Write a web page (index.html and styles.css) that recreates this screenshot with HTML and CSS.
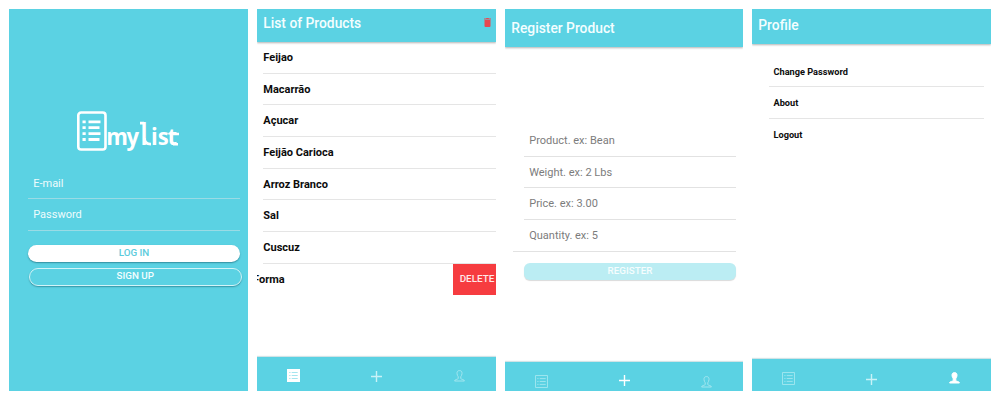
FILE: index.html
```html
<!DOCTYPE html>
<html lang="en">
<head>
<meta charset="utf-8">
<title>myList</title>
<link rel="stylesheet" href="styles.css">
</head>
<body>
<svg class="defs" width="0" height="0" aria-hidden="true">
  <symbol id="list-outline" viewBox="0 0 13 13">
    <path d="M.5.5h12v12H.5z M4.7 3.6h6 M4.7 6.5h6 M4.7 9.4h6 M2.3 3.6h1.2 M2.3 6.5h1.2 M2.3 9.4h1.2" fill="none" stroke="currentColor" stroke-width=".9"/>
  </symbol>
  <symbol id="list-solid" viewBox="0 0 13 13">
    <path d="M0 0h13v13H0z" fill="#fff"/>
    <path d="M4.7 3.5h6 M4.7 6.5h6 M4.7 9.5h6 M2.2 3.5h1.3 M2.2 6.5h1.3 M2.2 9.5h1.3" fill="none" stroke="#a5e5ee" stroke-width="1"/>
  </symbol>
  <symbol id="plus" viewBox="0 0 11 11">
    <path d="M5.5 0v11M0 5.5h11" fill="none" stroke="currentColor" stroke-width="1.4"/>
  </symbol>
  <symbol id="person" viewBox="0 0 11 12">
    <path d="M5.500.6C3.600.6 2.900 1.700 3 3.500c.1 1.500.6 2.400 1.200 3.200v1.900C3.500 9.600.8 9.200.6 11h9.800C10.200 9.200 7.500 9.600 6.800 8.600V6.700C7.400 5.900 7.900 5 8 3.500 8.100 1.700 7.400.6 5.500.6z"/>
  </symbol>
</svg>
<main class="board">
  <section class="screen login">
    <svg class="logo" width="104" height="44" viewBox="0 0 104 44" role="img" aria-label="mylist">
      <rect x="2.300" y="2.500" width="27.200" height="37" rx="2.800" fill="none" stroke="#fff" stroke-width="2.600"/>
      <path d="M6.500 11.800h3.200M6.500 17.600h3.200M6.500 23.600h3.200M6.500 29.500h3.200M12.500 11.800h12M12.500 17.600h11M12.500 23.600h12M12.500 29.500h11" stroke="#fff" stroke-width="2.800" fill="none"/>
      <text class="wordmark" transform="scale(.92 1)" y="35.500" x="33 55 69.500 81.500 89 99.500">my<tspan class="tall">l</tspan>ist</text>
      <path d="M64 13.100h4M68.300 28q0 6.200 6.700 6.200" fill="none" stroke="#fff" stroke-width="2.800"/>
      <path d="M97 34.200h5M97 24h6" fill="none" stroke="#fff" stroke-width="2.500"/>
    </svg>
    <div class="form">
      <div class="field">E-mail</div>
      <div class="field">Password</div>
    </div>
    <button class="btn primary">LOG IN</button>
    <button class="btn outline">SIGN UP</button>
  </section>

  <section class="screen products">
    <header class="bar"><h1>List of Products</h1>
      <svg width="7" height="9" viewBox="0 0 7 9"><path d="M0 .5h2L2.500 0h2L5 .5h2v1H0zM.5 2h6v6q0 1-1 1h-4q-1 0-1-1z" fill="#e84850"/></svg>
    </header>
    <ul class="items">
      <li>Feijao</li><li>Macarrão</li><li>Açucar</li><li>Feijão Carioca</li><li>Arroz Branco</li><li>Sal</li><li>Cuscuz</li>
      <li class="swiped"><span>Forma</span><button class="delete">DELETE</button></li>
    </ul>
    <nav class="tabs">
      <svg class="on" width="13" height="13"><use href="#list-solid"/></svg>
      <svg class="mid" width="11" height="11"><use href="#plus"/></svg>
      <svg class="user" width="11" height="12"><use href="#person"/></svg>
    </nav>
  </section>

  <section class="screen register">
    <header class="bar"><h1>Register Product</h1></header>
    <div class="form">
      <div class="field">Product. ex: Bean</div>
      <div class="field">Weight. ex: 2 Lbs</div>
      <div class="field">Price. ex: 3.00</div>
      <div class="field last">Quantity. ex: 5</div>
    </div>
    <button class="btn disabled">REGISTER</button>
    <nav class="tabs">
      <svg width="13" height="13"><use href="#list-outline"/></svg>
      <svg class="on" width="11" height="11"><use href="#plus"/></svg>
      <svg class="user" width="11" height="12"><use href="#person"/></svg>
    </nav>
  </section>

  <section class="screen profile">
    <header class="bar"><h1>Profile</h1></header>
    <ul class="menu"><li>Change Password</li><li>About</li><li>Logout</li></ul>
    <nav class="tabs">
      <svg width="13" height="13"><use href="#list-outline"/></svg>
      <svg class="mid" width="11" height="11"><use href="#plus"/></svg>
      <svg class="user solid" width="11" height="12"><use href="#person"/></svg>
    </nav>
  </section>
</main>
</body>
</html>
```
FILE: styles.css
```css
* { box-sizing: border-box; }
body { margin: 0; background: #fff; font-family: Roboto, "Liberation Sans", sans-serif; }
h1, ul { margin: 0; padding: 0; list-style: none; }
.defs { display: none; }
.board { display: grid; grid-template-columns: 239px 239px 238px 239px; column-gap: 9px; padding: 9px 9px 0; height: 391px; }
.screen { height: 382px; display: flex; flex-direction: column; overflow: hidden; background: #fff; }
.login { background: #5bd2e3; }

.logo { margin: 101px 0 0 67px; display: block; flex: none; }
.wordmark { font: 700 24px "Open Sans", sans-serif; fill: #fff; }
.tall { font-size: 31px; font-weight: 600; }

.form { display: flex; flex-direction: column; flex: none; }
.field { height: 31.700px; line-height: 32.500px; padding-left: 5.200px; font-size: 11px; }
.login .form { margin: 13.700px 8px 0 19px; }
.login .field { color: #effcfd; border-bottom: 1px solid #9adbe5; }
.register .form { margin: 78px 7px 0 19px; }
.register .field { color: #7c7c7c; border-bottom: 1px solid #e2e2e2; }
.register .last { margin-left: -11px; padding-left: 16.200px; }

.btn { font: 500 9.800px/1 Roboto, sans-serif; border: 0; padding: 0 0 1px; height: 17px; flex: none; }
.primary { margin: 14px 8px 0 19px; border-radius: 9px; background: #fff; color: #5bcbdc; box-shadow: 0 1px 1.500px rgba(0, 60, 75, .45); }
.outline { margin: 5.500px 6.500px 0 20px; height: 18px; border-radius: 9px; border: 1px solid #d2f4f8; background: #5bd2e3; color: #f4feff; box-shadow: 0 1px 1.500px rgba(0, 60, 75, .4); }
.disabled { margin: 11px 7px 0 19px; padding-bottom: 0; border-radius: 6px; background: #bbedf3; color: #f6fdfe; box-shadow: 0 1px 1px rgba(0, 0, 0, .15); }

.bar { flex: none; display: flex; justify-content: space-between; background: #5bd2e3; color: #f4feff; padding: 0 5px 0 6.300px; box-shadow: 0 1px 2px rgba(0, 0, 0, .3); }
.bar h1 { font-size: 13.800px; font-weight: 500; line-height: 16px; }
.products .bar { height: 33px; padding-top: 6px; }
.bar svg { margin-top: 3px; }
.register .bar { height: 38px; padding-top: 11px; }
.profile .bar { height: 35px; padding-top: 8px; }

.items { padding-left: 6.300px; flex: none; }
.items li { height: 31.700px; line-height: 32px; font-size: 11px; font-weight: 700; color: #0c0c0c; border-bottom: 1px solid #e5e5e5; }
.items .swiped { border: 0; display: flex; justify-content: space-between; margin-left: -10.300px; }
.delete { font: 500 9.900px/1 Roboto, sans-serif; width: 43px; height: 31px; border: 0; padding: 0 0 1px 5px; background: #f63c40; color: #ffe9e9; }

.menu { padding: 11.500px 7px 0 17px; }
.menu li { height: 31.700px; line-height: 31px; font-size: 9.200px; font-weight: 700; color: #0c0c0c; padding-left: 4.500px; border-bottom: 1px solid #e5e5e5; }
.menu li:last-child { border: 0; }

.tabs { margin-top: auto; flex: none; display: grid; grid-template-columns: 73px 1fr 73px; justify-items: center; align-items: start; background: #5bd2e3; color: #a3e6ef; box-shadow: 0 -1px 1px rgba(0, 100, 115, .18); }
.products .tabs { height: 34px; padding-top: 12px; }
.register .tabs { height: 29px; padding-top: 13px; }
.profile .tabs { height: 32px; padding-top: 13px; }
.tabs .mid { color: #c9f2f7; margin-top: 1.500px; }
.tabs .on { color: #fff; }
.user { fill: none; stroke: #a3e6ef; stroke-width: 1; margin-top: 1px; }
.profile .user { margin-top: 0; }
.solid { fill: #fff; stroke: #fff; }
```
